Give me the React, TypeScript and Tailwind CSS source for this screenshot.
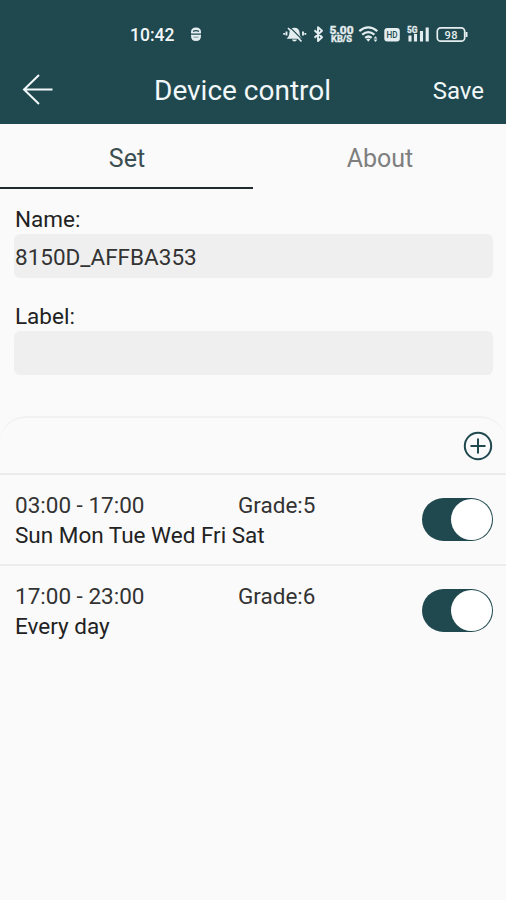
function StatusIcons() {
  return (
    <svg className="mt-[24px] h-5 w-[190px]" viewBox="281 24 190 20" fill="none" stroke="#e4eef0">
      {/* muted bell */}
      <path d="M286.500 38.700h16c-2-1.600-2.600-3-2.900-6-.3-3.400-2-5-5.100-5s-4.800 1.600-5.100 5c-.3 3-.9 4.400-2.900 6zM292 39.500c.5 2.600 4.500 2.600 5 0z" fill="#e4eef0" stroke="none" />
      <path d="M289.800 27.200l13 13" stroke="#20494f" strokeWidth="1.200" />
      <path d="M288 28l13.500 13.500" strokeWidth="1.700" />
      <path d="M286.500 31.500v4M284.200 33v1.800M303 31.500v4M305.300 33v1.800" strokeWidth="1.900" />
      {/* bluetooth */}
      <path d="M314.500 30.300l7.500 7-4 3.700V27.300l4 3.500-7.500 7" strokeWidth="1.900" strokeLinejoin="round" />
      <g fill="#e4eef0" strokeWidth=".4" fontFamily="Roboto, sans-serif" fontWeight="700">
        <text x="329.500" y="33.500" fontSize="10.500" textLength="24" lengthAdjust="spacingAndGlyphs">5.00</text>
        <text x="331" y="42" fontSize="9.500" textLength="21" lengthAdjust="spacingAndGlyphs">KB/S</text>
      </g>
      {/* wifi */}
      <path d="M359.300 31.200q9-7.500 18 0M362.200 34.700q6.100-5 12.200 0M365.200 37.800q3.200-2.600 6.400 0" strokeWidth="2.200" />
      <path d="M366.300 39.300q2-1.500 4 0l-2 2.400z" fill="#e4eef0" stroke="none" />
      <path d="M373.600 38.500l1.900-2.300 1.900 2.300zM373.600 39.600l1.900 2.300 1.900-2.300z" fill="#e4eef0" stroke="none" />
      {/* hd badge */}
      <rect x="384.300" y="28" width="15.500" height="13.500" rx="3" fill="#e4eef0" stroke="none" />
      <text x="386.500" y="37.800" fontSize="8.500" fontWeight="500" fontFamily="Roboto, sans-serif" fill="#20494f" stroke="none" textLength="11" lengthAdjust="spacingAndGlyphs">HD</text>
      {/* signal */}
      <text x="407" y="33" fontSize="9" fontWeight="700" fontFamily="Roboto, sans-serif" fill="#e4eef0" strokeWidth=".3" textLength="10.500" lengthAdjust="spacingAndGlyphs">5G</text>
      <path d="M410 41.500v-6M415.500 41.500v-7.500M421.500 41.500V31M427.200 41.500V27.500" strokeWidth="3.100" />
      {/* battery */}
      <rect x="437.300" y="27.800" width="27.400" height="13.400" rx="3.500" strokeWidth="1.700" />
      <path d="M466.500 32v5" strokeWidth="2" />
      <text x="444.500" y="38.500" fontSize="11" fontWeight="500" fontFamily="Roboto, sans-serif" fill="#e4eef0" stroke="none" textLength="13">98</text>
    </svg>
  );
}

function Toggle() {
  return (
    <button role="switch" aria-checked="true" aria-label="Schedule enabled" className="flex h-[43px] w-[71px] items-center justify-end rounded-full bg-[#20494f] pr-px">
      <span className="size-[41px] rounded-full bg-white" />
    </button>
  );
}

function Field({ label, value }: { label: string; value: string }) {
  return (
    <label className="block h-[97px] pr-[13px] pl-[14px]">
      <span className="block h-[28px] pl-px leading-[27px]">{label}</span>
      <span className="flex h-[44px] items-center rounded-[6px] bg-[#efefef] pt-[3px] pl-px text-[22.500px] text-[#333]">{value}</span>
    </label>
  );
}

function Schedule({ time, grade, days }: { time: string; grade: string; days: string }) {
  return (
    <li className="flex h-[91px] items-center justify-between border-t-2 border-[#ececec] pr-[13px] pl-[15px]">
      <div className="pt-px">
        <div className="flex leading-[30px] text-[#333]">
          <span className="w-[223px]">{time}</span>
          <span>{grade}</span>
        </div>
        <div className="leading-[31px]">{days}</div>
      </div>
      <Toggle />
    </li>
  );
}

export default function App() {
  return (
    <div className="h-[900px] w-[506px] overflow-hidden bg-[#fafafa] font-['Roboto',sans-serif] text-[22.500px] text-[#222]">
      <header className="h-[124px] bg-[#20494f] text-[#f2f8f9]">
        <div className="flex h-[56px] pl-[130px]">
          <span className="mt-[23px] w-[60px] text-[17.500px] leading-6 font-medium">10:42</span>
          <svg className="mt-[24px] mr-[75px] h-5 w-4" viewBox="190 24 16 20">
            <path d="M191 32q0-4.500 5-4.500t5 4.500v3.500q0 5.500-5 5.500t-5-5.500z" fill="#e4eef0" />
            <path d="M193 31.300q3-1.500 6 0M191 34.200h10" stroke="#20494f" strokeWidth="1.300" fill="none" />
            <path d="M193.500 37.200h5" stroke="#8ba2a6" strokeWidth="1.200" />
          </svg>
          <StatusIcons />
        </div>
        <div className="grid h-[68px] grid-cols-[130px_1fr_130px] items-center pr-[22px]">
          <button aria-label="Back" className="pl-[22px]">
            <svg className="h-8 w-8" viewBox="0 0 32 32" fill="none" stroke="#f2f8f9" strokeWidth="2">
              <path d="M17 1L2 15.500 17 30M2 15.500h28.500" />
            </svg>
          </button>
          <h1 className="pt-px pl-[24px] text-[28px] whitespace-nowrap">Device control</h1>
          <button className="pt-px text-right text-[24px]">Save</button>
        </div>
      </header>
      <nav className="grid h-[65px] grid-cols-2 text-[25px]">
        <button className="border-b-2 border-[#1f2c2e] pt-[6px] pl-px text-[#3b4f53]">Set</button>
        <button className="pt-[4px] pl-px text-[#7f7f7f]">About</button>
      </nav>
      <main>
        <div className="pt-[17px]">
          <Field label="Name:" value="8150D_AFFBA353" />
          <Field label="Label:" value="" />
        </div>
        <section className="mt-[16px] h-[520px] rounded-t-[26px] border-t-2 border-[#f1f1f1]">
          <div className="flex h-[55px] items-center justify-end pt-px pr-[13px]">
            <button aria-label="Add schedule">
              <svg className="block h-[30px] w-[30px]" viewBox="0 0 30 30" fill="none" stroke="#20494f" strokeWidth="2">
                <circle cx="15" cy="15" r="13.200" />
                <path d="M7.500 15h15M15 7.500v15" />
              </svg>
            </button>
          </div>
          <ul>
            <Schedule time="03:00 - 17:00" grade="Grade:5" days="Sun Mon Tue Wed Fri Sat" />
            <Schedule time="17:00 - 23:00" grade="Grade:6" days="Every day" />
          </ul>
        </section>
      </main>
    </div>
  );
}
